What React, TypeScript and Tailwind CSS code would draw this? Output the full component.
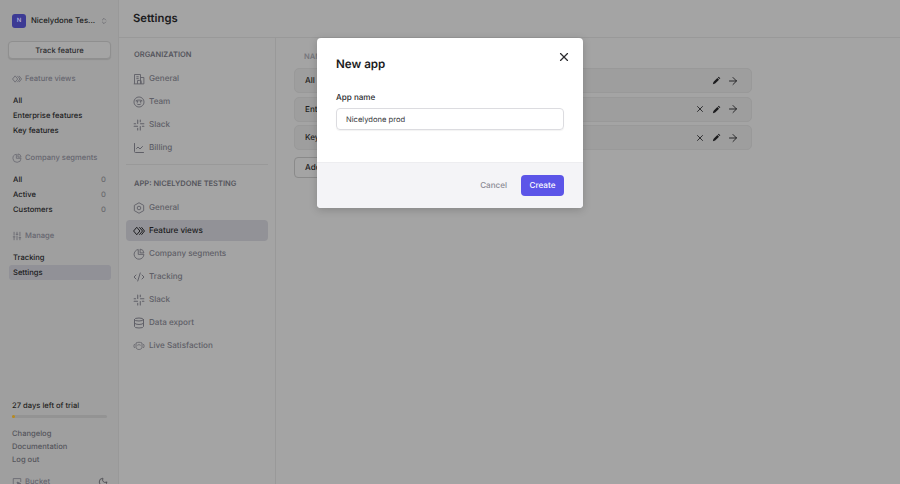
import { ArrowRight, ChartLine, ChevronsUpDown, CodeXml, Database, Moon, SlidersVertical, X } from 'lucide-react';
import type { ReactNode } from 'react';

const FeatureIcon = ({ className }: { className?: string }) => (
  <svg viewBox="0 0 16 16" fill="none" stroke="currentColor" strokeWidth="1.3" strokeLinejoin="round" className={className}>
    <path d="M5 3 L0.8 8 L5 13 L9.2 8 Z" />
    <path d="M8.5 3 L12.7 8 L8.5 13" />
    <path d="M11.3 3 L15.3 8 L11.3 13" />
  </svg>
);

const PieIcon = ({ className }: { className?: string }) => (
  <svg viewBox="0 0 16 16" fill="none" stroke="currentColor" strokeWidth="1.2" className={className}>
    <path d="M14.5 8.5 A6.5 6.5 0 1 1 7 2" />
    <path d="M7 2 V8.5 H14.5" />
    <path d="M9.5 1.5 A5.5 5.5 0 0 1 14.5 6.5 H9.5 Z" />
  </svg>
);

const BuildingIcon = ({ className }: { className?: string }) => (
  <svg viewBox="0 0 16 16" fill="none" stroke="currentColor" strokeWidth="1.2" className={className}>
    <path d="M2 14.5 V2 H10 V14.5" />
    <path d="M10 6 H14.5 V14.5 H1" />
    <path d="M6 14.5 V10 H8.5 A1.5 1.5 0 0 1 11 11.5 V14.5" />
    <path d="M4.5 5 H7.5 M4.5 7.5 H7.5" />
  </svg>
);

const SmileIcon = ({ className }: { className?: string }) => (
  <svg viewBox="0 0 16 16" fill="none" stroke="currentColor" strokeWidth="1.2" className={className}>
    <circle cx="8" cy="8" r="6.7" />
    <path d="M3.5 6.5 C5 5 11 5 12.5 6.5" />
    <path d="M5 10 C6 12 10 12 11 10" />
    <circle cx="5.8" cy="7.6" r="0.7" fill="currentColor" />
    <circle cx="10.2" cy="7.6" r="0.7" fill="currentColor" />
  </svg>
);

const TargetIcon = ({ className }: { className?: string }) => (
  <svg viewBox="0 0 16 16" fill="none" stroke="currentColor" strokeWidth="1.2" className={className}>
    <path d="M8 1 L14.2 4.5 V11.5 L8 15 L1.8 11.5 V4.5 Z" strokeLinejoin="round" />
    <circle cx="8" cy="8" r="2.4" />
  </svg>
);

const SlackIcon = ({ className }: { className?: string }) => (
  <svg viewBox="0 0 16 16" fill="none" stroke="currentColor" strokeWidth="1.4" strokeLinecap="round" className={className}>
    <path d="M6.3 1.5 V6 M10 6.3 H14.5 M9.7 10 V14.5 M1.5 9.7 H6" />
    <path d="M9.7 1.5 V3.5 M14.5 9.7 H12.5 M6.3 14.5 V12.5 M1.5 6.3 H3.5" />
  </svg>
);

const LiveIcon = ({ className }: { className?: string }) => (
  <svg viewBox="0 0 18 16" fill="none" stroke="currentColor" strokeWidth="1.2" className={className}>
    <path d="M4.5 3.5 C7 2 11 2 13.5 3.5 V11 C11 14 7 14 4.5 11 Z" />
    <path d="M6.5 7 C8 5.8 10 5.8 11.5 7" />
    <path d="M2.5 5 C1 7 1 9 2.5 11 M15.5 5 C17 7 17 9 15.5 11" />
  </svg>
);

const BucketIcon = ({ className }: { className?: string }) => (
  <svg viewBox="0 0 16 16" fill="none" stroke="currentColor" strokeWidth="1.3" className={className}>
    <path d="M14 8 V2.5 H2 V14 H8" />
    <path d="M8 8 L14 10.5 L11 11.5 L10 14.5 Z" fill="currentColor" />
  </svg>
);

const PencilSolid = ({ className }: { className?: string }) => (
  <svg viewBox="0 0 16 16" fill="currentColor" className={className}>
    <path d="M1.5 14.5 L2.5 10.5 L9.5 3.5 L12.5 6.5 L5.5 13.5 Z" />
    <path d="M10.5 2.5 L11.8 1.2 L14.8 4.2 L13.5 5.5 Z" />
  </svg>
);

const SideLink = ({ label, count, active }: { label: string; count?: string; active?: boolean }) => (
  <div className={`-ml-[3px] flex h-[15px] items-center justify-between rounded-[3px] pl-[4px] pr-[5px] ${active ? 'bg-[#919197]' : ''}`}>
    <span className="text-[#1b1b1d]">{label}</span>
    {count && <span className="text-[#6a6a6e]">{count}</span>}
  </div>
);

const SideHeading = ({ icon, label }: { icon: ReactNode; label: string }) => (
  <div className="flex items-center gap-[3px] text-[#66666f]">
    <span className="flex w-[10px] justify-center">{icon}</span>
    <span>{label}</span>
  </div>
);

const SubLink = ({ icon, label, active }: { icon: ReactNode; label: string; active?: boolean }) => (
  <div className={`flex h-[21px] items-center gap-[5px] rounded-[4px] pl-[7px] text-[8.1px] ${active ? 'bg-[#929297] text-[#1b1b1d]' : 'text-[#5f5f67]'}`}>
    <span className="flex w-[11px] justify-center">{icon}</span>
    <span>{label}</span>
  </div>
);

const ViewRow = ({ label, removable }: { label: string; removable?: boolean }) => (
  <div className="flex h-[25px] items-center justify-between rounded-[5px] border border-[#999999] bg-[#9e9e9e] pl-[10px] pr-[12px] text-[8.1px]">
    <span className="text-[#1f1f21]">{label}</span>
    <div className="flex items-center gap-[6.5px] text-[#1b1b1d]">
      {removable && <X className="h-[10px] w-[10px]" strokeWidth={2} />}
      <PencilSolid className="h-[9px] w-[9px]" />
      <ArrowRight className="h-[12px] w-[12px]" strokeWidth={1.8} />
    </div>
  </div>
);

const App = () => {
  const iconCls = 'h-[12px] w-[12px] shrink-0';

  return (
    <div className="relative flex h-[484px] w-[900px] overflow-hidden whitespace-nowrap bg-[#a4a4a4] text-[7.6px] font-medium leading-[15px] [font-family:Inter,sans-serif] [text-rendering:geometricPrecision]">
      {/* sidebar */}
      <aside className="flex h-[500px] w-[119px] shrink-0 flex-col border-r border-[#999999] bg-[#9f9f9f] pl-[12px] pr-[7px] pt-[13px]">
        <div className="flex h-[15px] items-center">
          <div className="flex h-[14px] w-[14px] shrink-0 items-center justify-center rounded-[3px] bg-[#3c3a94] text-[6px] text-[#b9b8e0]">N</div>
          <span className="ml-[5px] text-[7.75px] text-[#1b1b1d]">Nicelydone Tes...</span>
          <ChevronsUpDown className="ml-[5px] h-[8px] w-[8px] shrink-0 text-[#5f5f67]" />
        </div>
        <div className="-ml-[4px] mt-[13px] flex h-[18px] items-center justify-center rounded-[4px] border border-[#8f8f8f] bg-[#a4a4a4] text-[#2c2c2f] shadow-[0_1px_1px_rgba(0,0,0,0.1)]">Track feature</div>

        <div className="mt-[12px]">
          <SideHeading icon={<FeatureIcon className="h-[10px] w-[10px]" />} label="Feature views" />
        </div>
        <div className="mt-[7px]">
          <SideLink label="All" />
          <SideLink label="Enterprise features" />
          <SideLink label="Key features" />
        </div>

        <div className="mt-[12px]">
          <SideHeading icon={<PieIcon className="h-[10px] w-[10px]" />} label="Company segments" />
        </div>
        <div className="mt-[7px]">
          <SideLink label="All" count="0" />
          <SideLink label="Active" count="0" />
          <SideLink label="Customers" count="0" />
        </div>

        <div className="mt-[11px]">
          <SideHeading icon={<SlidersVertical className="h-[10px] w-[10px]" />} label="Manage" />
        </div>
        <div className="mt-[7px]">
          <SideLink label="Tracking" />
          <SideLink label="Settings" active />
        </div>

        <div className="mt-[118px]">
          <div className="text-[#1f1f21]">27 days left of trial</div>
          <div className="mt-[2px] mb-[9px] h-[3px] w-[95px] rounded-full bg-[#939393]">
            <div className="h-[3px] w-[3px] rounded-full bg-[#b98a1c]" />
          </div>
          <div className="leading-[13px] text-[#55555c]">Changelog</div>
          <div className="leading-[13px] text-[#55555c]">Documentation</div>
          <div className="leading-[13px] text-[#55555c]">Log out</div>
        </div>
        <div className="mt-[8px] flex items-center justify-between pr-[3px] text-[#66666f]">
          <div className="flex items-center gap-[3px]">
            <BucketIcon className="h-[10px] w-[10px]" />
            <span>Bucket</span>
          </div>
          <Moon className="h-[10px] w-[10px] text-[#44444a]" />
        </div>
      </aside>

      <div className="flex min-w-0 flex-1 flex-col">
        <header className="flex h-[38px] shrink-0 items-center border-b border-[#999999] pl-[14px] text-[11.25px] font-semibold text-[#1b1b1d]">Settings</header>

        <div className="flex flex-1">
          {/* settings nav */}
          <nav className="w-[157px] shrink-0 border-r border-[#999999] px-[7px] pt-[9px]">
            <div className="pl-[8px] text-[7.5px] font-semibold text-[#55555c]">ORGANIZATION</div>
            <div className="mt-[6px] flex flex-col gap-[2px]">
              <SubLink icon={<BuildingIcon className={iconCls} />} label="General" />
              <SubLink icon={<SmileIcon className={iconCls} />} label="Team" />
              <SubLink icon={<SlackIcon className={iconCls} />} label="Slack" />
              <SubLink icon={<ChartLine className={iconCls} />} label="Billing" />
            </div>
            <div className="mt-[6px] h-px bg-[#999999]" />
            <div className="mt-[11px] pl-[8px] text-[7.5px] font-semibold text-[#55555c]">APP: NICELYDONE TESTING</div>
            <div className="mt-[6px] flex flex-col gap-[2px]">
              <SubLink icon={<TargetIcon className={iconCls} />} label="General" />
              <SubLink active icon={<FeatureIcon className={iconCls} />} label="Feature views" />
              <SubLink icon={<PieIcon className={iconCls} />} label="Company segments" />
              <SubLink icon={<CodeXml className={iconCls} />} label="Tracking" />
              <SubLink icon={<SlackIcon className={iconCls} />} label="Slack" />
              <SubLink icon={<Database className={iconCls} />} label="Data export" />
              <SubLink icon={<LiveIcon className={iconCls} />} label="Live Satisfaction" />
            </div>
          </nav>

          {/* views list */}
          <main className="w-[476px] shrink-0 pl-[18px] pt-[11px]">
            <div className="pl-[10px] text-[7.5px] font-semibold text-[#76767c]">NAME</div>
            <div className="mt-[4px] flex flex-col gap-[3.7px]">
              <ViewRow label="All" />
              <ViewRow label="Enterprise features" removable />
              <ViewRow label="Key features" removable />
            </div>
            <div className="mt-[7px] flex h-[21px] w-[70px] items-center rounded-[4px] border border-[#8a8a8a] pl-[10px] text-[8.1px] text-[#1b1b1d]">Add view</div>
          </main>
        </div>
      </div>

      {/* modal */}
      <div className="absolute left-[317px] top-[38px] flex h-[170px] w-[266px] flex-col overflow-hidden rounded-[4px] bg-white shadow-[0_2px_8px_rgba(0,0,0,0.18)]">
        <div className="relative h-[125px] border-b border-[#ededf0] px-[19px] pt-[17px]">
          <X className="absolute right-[12px] top-[12px] h-[14px] w-[14px] text-[#2c2c2f]" strokeWidth={2} />
          <div className="text-[11.6px] font-semibold leading-[18px] text-[#1b1b1d]">New app</div>
          <div className="mt-[17px] text-[8.1px] text-[#2c2c2f]">App name</div>
          <div className="mt-[3px] flex h-[22px] items-center rounded-[4px] border border-[#dcdce0] pl-[9px] text-[7.6px] font-normal text-[#3a3a3e] shadow-[0_1px_1px_rgba(0,0,0,0.05)]">Nicelydone prod</div>
        </div>
        <div className="flex flex-1 items-center justify-end bg-[#f4f4f7] pr-[19px] text-[8.1px]">
          <span className="mr-[14px] text-[#8a8a94]">Cancel</span>
          <div className="flex h-[21px] w-[43px] items-center justify-center rounded-[4px] bg-[#5c55e8] text-white">Create</div>
        </div>
      </div>
    </div>
  );
};

export default App;
